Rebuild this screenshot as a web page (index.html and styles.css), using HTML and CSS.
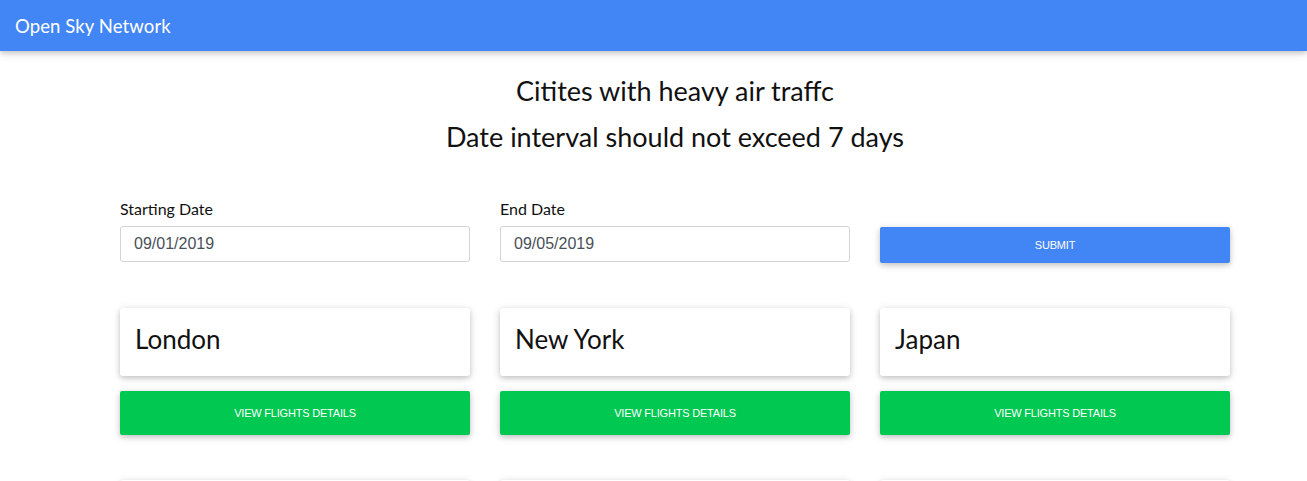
FILE: index.html
```html
<!DOCTYPE html>
<html>
<head>
<meta charset="utf-8">
<link rel="stylesheet" href="styles.css">
</head>
<body>
<nav class="navbar"><span class="brand">Open Sky Network</span></nav>
<main class="container">
  <h2 class="title">Citites with heavy air traffc</h2>
  <h2 class="title second">Date interval should not exceed 7 days</h2>
  <form class="form-row">
    <div class="field">
      <label class="label">Starting Date</label>
      <input class="input" type="text" value="09/01/2019">
    </div>
    <div class="field">
      <label class="label">End Date</label>
      <input class="input" type="text" value="09/05/2019">
    </div>
    <div class="field">
      <button type="button" class="btn btn-primary">SUBMIT</button>
    </div>
  </form>
  <section class="grid">
    <div class="col"><div class="card"><span class="city">London</span></div><button class="btn btn-success">VIEW FLIGHTS DETAILS</button></div>
    <div class="col"><div class="card"><span class="city">New York</span></div><button class="btn btn-success">VIEW FLIGHTS DETAILS</button></div>
    <div class="col"><div class="card"><span class="city">Japan</span></div><button class="btn btn-success">VIEW FLIGHTS DETAILS</button></div>
    <div class="col"><div class="card"><span class="city"></span></div></div>
    <div class="col"><div class="card"><span class="city"></span></div></div>
    <div class="col"><div class="card"><span class="city"></span></div></div>
  </section>
</main>
</body>
</html>
```
FILE: styles.css
```css
* { box-sizing: border-box; }
html, body { margin: 0; padding: 0; background: #fff; }
body { font-family: Lato, "Noto Sans", sans-serif; color: #212529; overflow: hidden; }
.navbar {
  height: 51px;
  background: #4285f4;
  display: flex;
  align-items: center;
  padding-left: 15px;
  box-shadow: 0 2px 5px 0 rgba(0,0,0,.16), 0 2px 10px 0 rgba(0,0,0,.12);
  position: relative;
  z-index: 2;
}
.brand { color: #fff; font-size: 18.5px; letter-spacing: 0.1px; }
.container { width: 1110px; margin-left: 120px; padding-top: 22px; }
.title {
  margin: 0;
  text-align: center;
  font-weight: 400;
  font-size: 27px;
  line-height: 36px;
  color: #111;
}
.second { margin-top: 10px; }
.form-row {
  display: grid;
  grid-template-columns: repeat(3, 350px);
  column-gap: 30px;
  margin-top: 45px;
  align-items: end;
}
.field { display: flex; flex-direction: column; }
.label { font-size: 16px; margin-bottom: 8px; line-height: 18px; color: #111; }
.input {
  height: 36px;
  border: 1px solid #ced4da;
  border-radius: 3px;
  padding: 0 13px;
  font-family: "Liberation Sans", Arial, sans-serif;
  font-size: 16px;
  color: #495057;
  outline: none;
}
.btn {
  border: 0;
  border-radius: 2px;
  color: #fff;
  font-family: "Liberation Sans", Arial, sans-serif;
  font-size: 11px;
  letter-spacing: -0.2px;
  box-shadow: 0 2px 5px 0 rgba(0,0,0,.16), 0 2px 10px 0 rgba(0,0,0,.12);
  cursor: pointer;
}
.btn-primary { background: #4285f4; height: 36px; margin-bottom: -1px; }
.btn-success { background: #00c851; height: 44px; width: 100%; margin-top: 15px; }
.grid {
  display: grid;
  grid-template-columns: repeat(3, 350px);
  column-gap: 30px;
  row-gap: 45px;
  margin-top: 46px;
}
.col { display: flex; flex-direction: column; }
.card {
  height: 68px;
  background: #fff;
  border-radius: 3px;
  box-shadow: 0 2px 5px 0 rgba(0,0,0,.16), 0 2px 10px 0 rgba(0,0,0,.12);
  display: flex;
  align-items: center;
  padding-left: 15px;
  padding-bottom: 6px;
}
.city { font-size: 26px; color: #111; }
```
